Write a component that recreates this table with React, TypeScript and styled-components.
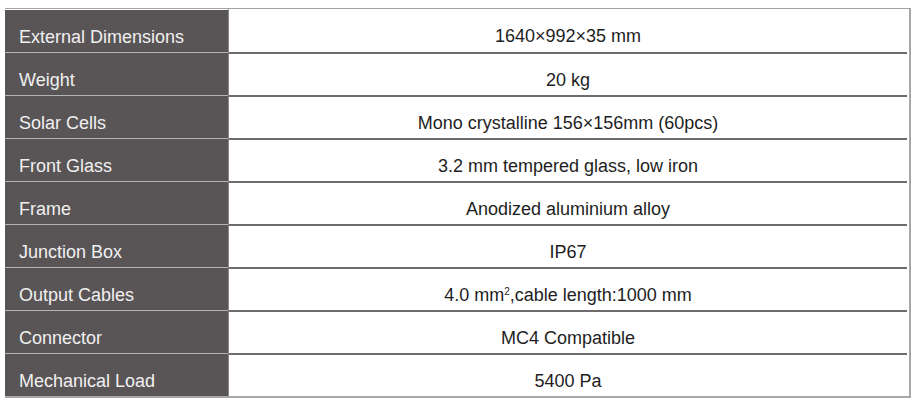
import React from "react";
import styled, { createGlobalStyle } from "styled-components";

const GlobalStyle = createGlobalStyle`
    html, body {
        margin: 0;
        padding: 0;
        background: #ffffff;
    }
    body {
        font-family: "Liberation Sans", Arial, sans-serif;
    }
`;

const specs = [
    { label: "External Dimensions", value: "1640×992×35 mm" },
    { label: "Weight", value: "20 kg" },
    { label: "Solar Cells", value: "Mono crystalline 156×156mm (60pcs)" },
    { label: "Front Glass", value: "3.2 mm tempered glass, low iron" },
    { label: "Frame", value: "Anodized aluminium alloy" },
    { label: "Junction Box", value: "IP67" },
    {
        label: "Output Cables",
        value: (
            <>
                4.0 mm<sup>2</sup>,cable length:1000 mm
            </>
        ),
    },
    { label: "Connector", value: "MC4 Compatible" },
    { label: "Mechanical Load", value: "5400 Pa" },
];

const Page = styled.div`
    padding: 8px 10px 0 5px;
    width: 918px;
    box-sizing: border-box;
`;

const Table = styled.div`
    display: grid;
    grid-template-columns: 223px 679px;
    grid-auto-rows: 43px;
    border-top: 1px solid #a3a3a3;
    border-right: 2px solid #a8a8a8;
    border-bottom: 2px solid #a8a8a8;
    width: 904px;
`;

const Label = styled.div<{ $first?: boolean }>`
    background: #595556;
    color: #f0f0f0;
    font-size: 18px;
    box-sizing: border-box;
    display: flex;
    align-items: center;
    padding-left: 14px;
    padding-top: 12px;
    border-top: ${(p) => (p.$first ? "1px solid #ffffff" : "1px solid #b5b3b3")};
`;

const Value = styled.div<{ $first?: boolean }>`
    color: #1e1e1e;
    font-size: 18px;
    box-sizing: border-box;
    display: flex;
    align-items: center;
    justify-content: center;
    padding-top: 11px;
    border-top: ${(p) => (p.$first ? "none" : "2px solid #6d6b6b")};
    border-left: 1px solid #8a8888;

    sup {
        font-size: 10px;
        line-height: 0;
        position: relative;
        top: -3px;
    }
`;

export default function App() {
    return (
        <>
            <GlobalStyle />
            <Page>
                <Table>
                    {specs.map((s, i) => (
                        <React.Fragment key={s.label}>
                            <Label $first={i === 0}>{s.label}</Label>
                            <Value $first={i === 0}>{s.value}</Value>
                        </React.Fragment>
                    ))}
                </Table>
            </Page>
        </>
    );
}
